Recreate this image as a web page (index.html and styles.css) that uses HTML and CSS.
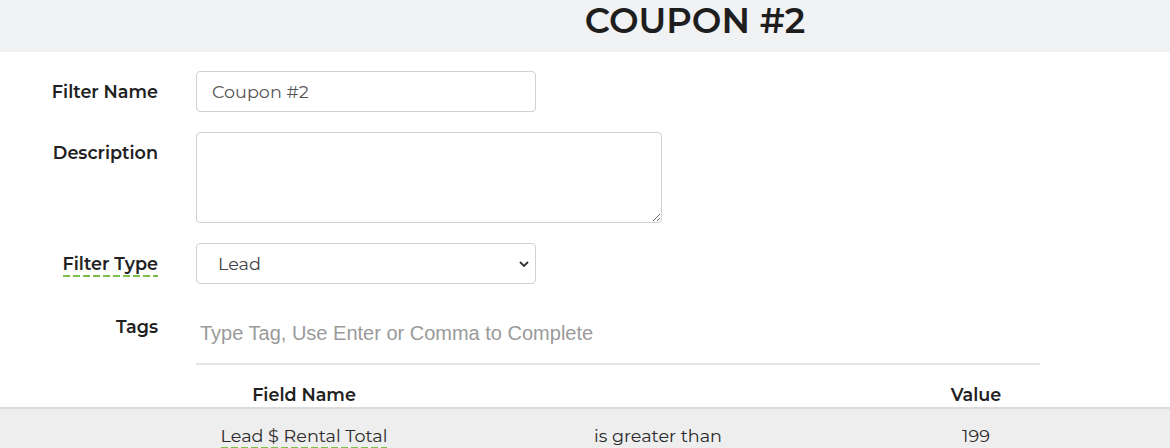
FILE: index.html
```html
<!DOCTYPE html>
<html lang="en">
<head>
    <meta charset="UTF-8">
    <meta name="viewport" content="width=device-width, initial-scale=1.0">
    <link rel="stylesheet" href="styles.css">
</head>
<body>
    <div class="page-head">
        <h1>COUPON #2</h1>
    </div>
    <form class="filter-form">
        <div class="row">
            <label class="label">Filter Name</label>
            <input type="text" class="field short" value="Coupon #2">
        </div>
        <div class="row">
            <label class="label">Description</label>
            <textarea class="field area"></textarea>
        </div>
        <div class="row">
            <label class="label"><span class="marked">Filter Type</span></label>
            <select class="field short select">
                <option>Lead</option>
            </select>
        </div>
        <div class="row tags-row">
            <label class="label">Tags</label>
            <input type="text" class="tags" placeholder="Type Tag, Use Enter or Comma to Complete">
        </div>
    </form>

    <div class="rules">
        <div class="rules-head">
            <div class="col-name">Field Name</div>
            <div class="col-op"></div>
            <div class="col-val">Value</div>
        </div>
        <div class="rules-row">
            <div class="col-name"><span class="marked">Lead $ Rental Total</span></div>
            <div class="col-op">is greater than</div>
            <div class="col-val">199</div>
        </div>
    </div>
</body>
</html>
```

FILE: styles.css
```css
body {
    margin: 0;
    font-family: "Montserrat", "Noto Sans", sans-serif;
    font-size: 17.6px;
    color: #212121;
    background: #fff;
}
.page-head {
    background-color: #f1f2f4;
    height: 52px;
    padding-left: 220px;
    text-align: center;
}
.page-head h1 {
    margin: 0;
    font-size: 35.2px;
    font-weight: 600;
    line-height: 42px;
    color: #1e1e1e;
}
.filter-form {
    padding-top: 19px;
}
.row {
    display: flex;
    align-items: flex-start;
    margin-bottom: 20px;
}
.label {
    width: 158px;
    text-align: right;
    padding-right: 38px;
    font-size: 17.6px;
    font-weight: 600;
    line-height: 41px;
    flex-shrink: 0;
}
.field {
    box-sizing: border-box;
    border: 1px solid #d0d0d0;
    border-radius: 4px;
    font-family: inherit;
    font-size: 17.6px;
    color: #555;
    background: #fff;
}
.short {
    width: 340px;
    height: 41px;
    padding: 0 15px;
}
.area {
    width: 466px;
    height: 91px;
    resize: vertical;
}
.select {
    appearance: none;
    padding-left: 21px;
    color: #444;
    background-image: url("data:image/svg+xml,%3Csvg xmlns='http://www.w3.org/2000/svg' width='10' height='6' viewBox='0 0 10 6'%3E%3Cpath d='M1 1l4 4 4-4' fill='none' stroke='%23333' stroke-width='1.8'/%3E%3C/svg%3E");
    background-repeat: no-repeat;
    background-position: right 6px center;
}
/* green dashed underline under flagged words */
.marked {
    padding-bottom: 3px;
    background-image: linear-gradient(to right, #7cbf47 70%, transparent 70%);
    background-size: 10px 2px;
    background-repeat: repeat-x;
    background-position: 0 100%;
}
.tags-row {
    margin-bottom: 0;
}
.tags-row .label {
    line-height: 24px;
    padding-top: 11px;
}
.tags {
    box-sizing: border-box;
    width: 844px;
    height: 61px;
    border: none;
    border-bottom: 2px solid #e6e6e6;
    padding: 9px 4px 10px 4px;
    font-family: "Liberation Sans", Arial, sans-serif;
    font-size: 20px;
    outline: none;
}
.tags::placeholder {
    color: #9a9a9a;
}
.rules {
    margin-top: 14px;
}
.rules-head,
.rules-row {
    display: grid;
    grid-template-columns: 216px 492px 144px;
    padding-left: 196px;
    text-align: center;
}
.rules-head {
    font-weight: 600;
    height: 28px;
    line-height: 32px;
}
.rules-row {
    background-color: #eeeeee;
    border-top: 2px solid #dcdcdc;
    height: 60px;
    line-height: 54px;
    color: #2a2a2a;
}
```
